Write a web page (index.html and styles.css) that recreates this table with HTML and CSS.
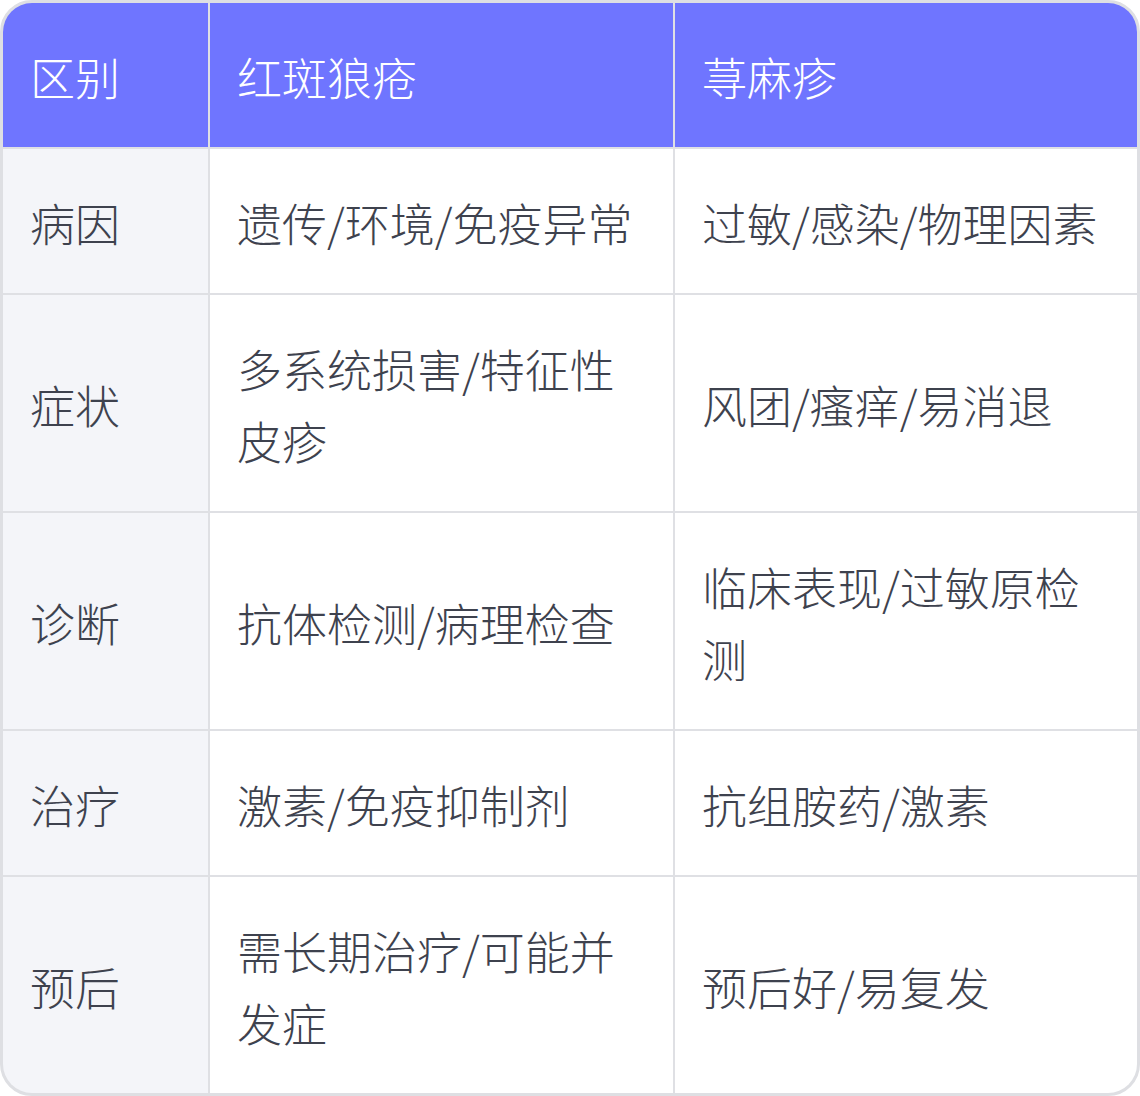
FILE: index.html
```html
<!DOCTYPE html>
<html lang="zh">
<head>
<meta charset="utf-8">
<link rel="stylesheet" href="styles.css">
</head>
<body>
<div class="table" role="table">
  <div class="cell head">区别</div>
  <div class="cell head">红斑狼疮</div>
  <div class="cell head">荨麻疹</div>

  <div class="cell label">病因</div>
  <div class="cell">遗传/环境/免疫异常</div>
  <div class="cell">过敏/感染/物理因素</div>

  <div class="cell label">症状</div>
  <div class="cell">多系统损害/特征性皮疹</div>
  <div class="cell">风团/瘙痒/易消退</div>

  <div class="cell label">诊断</div>
  <div class="cell">抗体检测/病理检查</div>
  <div class="cell">临床表现/过敏原检测</div>

  <div class="cell label">治疗</div>
  <div class="cell">激素/免疫抑制剂</div>
  <div class="cell">抗组胺药/激素</div>

  <div class="cell label">预后</div>
  <div class="cell">需长期治疗/可能并发症</div>
  <div class="cell">预后好/易复发</div>
</div>
</body>
</html>
```

FILE: styles.css
```css
html, body {
  margin: 0;
  padding: 0;
  background: #ffffff;
}

.table {
  box-sizing: border-box;
  width: 1140px;
  height: 1096px;
  border: 3px solid #dedfe3;
  border-radius: 32px;
  overflow: hidden;
  display: grid;
  grid-template-columns: 205px 463px 462px;
  grid-template-rows: 144px 144px 216px 216px 144px 216px;
  gap: 2px;
  background: #dfe0e4;
  font-family: "Noto Sans CJK SC", "Noto Sans", sans-serif;
  font-size: 45px;
  line-height: 72px;
  font-weight: 300;
  color: #3e424e;
}

.cell {
  box-sizing: border-box;
  padding: 38px 27px 34px;
  background: #ffffff;
  display: flex;
  align-items: center;
}

.cell.head {
  background: #6f75ff;
  color: #ffffff;
}

.cell.label {
  background: #f4f5f9;
}
```
